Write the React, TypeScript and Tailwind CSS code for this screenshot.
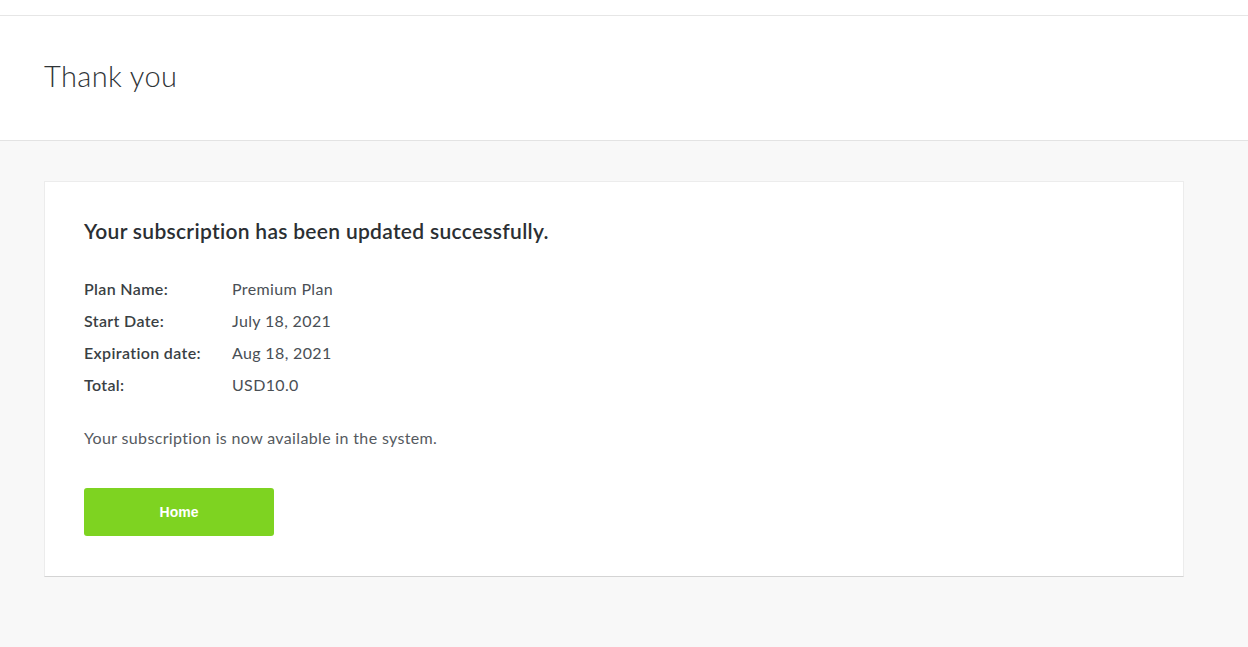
export default function App() {
  const rows = [
    { label: 'Plan Name:', value: 'Premium Plan' },
    { label: 'Start Date:', value: 'July 18, 2021' },
    { label: 'Expiration date:', value: 'Aug 18, 2021' },
    { label: 'Total:', value: 'USD10.0' },
  ];

  return (
    <div className="min-h-[647px] bg-[#f8f8f8] font-['Lato',sans-serif] text-[#333]">
      <div className="h-4 border-b border-[#e6e6e6] bg-white" />
      <header className="flex h-[125px] items-center border-b border-[#e3e3e3] bg-white px-11">
        <h1 className="mb-1 text-[29px] font-light tracking-[0.4px] text-[#2f3437]">Thank you</h1>
      </header>
      <main className="px-11 pt-10">
        <div className="w-[1140px] border border-[#ececec] border-b-[#d4d4d4] bg-white px-[39px] pt-[34px] pb-10">
          <h2 className="text-[21px] font-semibold leading-[30px] tracking-[0.3px] text-[#2b2f33]">
            Your subscription has been updated successfully.
          </h2>
          <dl className="mt-[27px] flex flex-col">
            {rows.map((r) => (
              <div key={r.label} className="flex h-8 items-center text-[16px] tracking-[0.35px]">
                <dt className="w-[148px] font-semibold text-[#3a3f44]">{r.label}</dt>
                <dd className="text-[#4a4f55]">{r.value}</dd>
              </div>
            ))}
          </dl>
          <p className="mt-[26px] text-[16px] leading-[22px] tracking-[0.35px] text-[#555a60]">
            Your subscription is now available in the system.
          </p>
          <button className="mt-[39px] h-12 w-[190px] rounded-[3px] bg-[#7ed321] font-['Liberation_Sans',sans-serif] text-[14px] font-bold text-white">
            Home
          </button>
        </div>
      </main>
    </div>
  );
}
